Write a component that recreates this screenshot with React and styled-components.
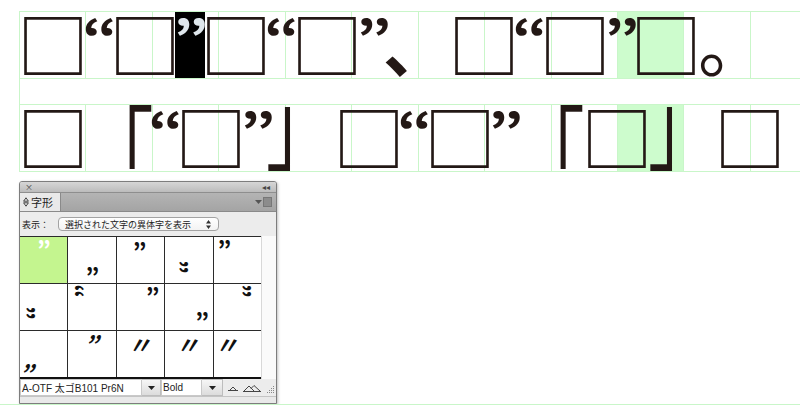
import styled, { createGlobalStyle } from "styled-components";

const GUIDE = "#c9f6c9";
const INK = "#231815";
const CELL = 66.45;

const GlobalStyle = createGlobalStyle`
  html, body { margin: 0; padding: 0; background: #fff; }
  body { font-family: "Noto Sans CJK JP", "Liberation Sans", sans-serif; }
`;

// type metrics: size, weight, advance (em), ink shift, squash
const TYPES = {
  "□": { size: 72, weight: 400, adv: 1, dx: -5, dy: -3 },
  "“": { size: 62, weight: 700, adv: 0.4, dx: -5, dy: -3, sy: 0.78 },
  "”": { size: 62, weight: 700, adv: 0.4, dx: -5, dy: -3, sy: 0.78 },
  "、": { size: 66, weight: 700, adv: 1, dx: -4, dy: -2 },
  "。": { size: 70, weight: 400, adv: 1, dx: -3, dy: -3 },
  "「": { size: 98, weight: 400, adv: 0.7, dx: -43, dy: 7, sx: 0.7 },
  "」": { size: 98, weight: 400, adv: 0.7, dx: -3, dy: -19, sx: 0.7 },
};

// ink start x of every glyph on the frame grid
const line1 = [
  { x: 23, ch: "□" },
  { x: 88, ch: "“" },
  { x: 115, ch: "□" },
  { x: 176, ch: "”", selected: true, shift: 3 },
  { x: 206, ch: "□" },
  { x: 270, ch: "“" },
  { x: 297, ch: "□" },
  { x: 362, ch: "”" },
  { x: 388, ch: "、" },
  { x: 454, ch: "□" },
  { x: 518, ch: "“" },
  { x: 545, ch: "□" },
  { x: 610, ch: "”" },
  { x: 636, ch: "□" },
  { x: 702, ch: "。" },
];

const line2 = [
  { x: 23, ch: "□" },
  { x: 129, ch: "「" },
  { x: 154, ch: "“" },
  { x: 181, ch: "□" },
  { x: 246, ch: "”" },
  { x: 270, ch: "」" },
  { x: 339, ch: "□" },
  { x: 403, ch: "“" },
  { x: 430, ch: "□" },
  { x: 494, ch: "”" },
  { x: 560, ch: "「" },
  { x: 587, ch: "□" },
  { x: 652, ch: "」" },
  { x: 720, ch: "□" },
];

// alternates shown in the glyph panel (ink position inside each 48px cell)
const glyphs = [
  { x: 18, y: 5, active: true },
  { x: 18, y: 33 },
  { x: 17, y: 8 },
  { x: 13, y: 29, rot: 90 },
  { x: 5, y: 3 },
  { x: 5, y: 28, rot: 90 },
  { x: 5, y: 5, rot: -90 },
  { x: 30, y: 5 },
  { x: 31, y: 31 },
  { x: 27, y: 5, rot: 90 },
  { x: 4, y: 36, skew: -18 },
  { x: 21, y: 7, skew: -18 },
  { x: 15, y: 7, ch: "〃", skew: -10 },
  { x: 15, y: 7, ch: "〃", skew: -10 },
  { x: 5, y: 7, ch: "〃", skew: -10 },
];

function TextLine({ items }) {
  return (
    <Row $lead={items[0].x - 20}>
      {items.map((g, i) => {
        const next = items[i + 1];
        const w = next ? next.x - g.x : 70;
        const t = TYPES[g.ch];
        const ls = Math.min(0, Math.floor(w - t.size * t.adv) - 1);
        return (
          <Glyph key={i} $w={w} $selected={g.selected}>
            <Ink
              $size={t.size}
              $weight={t.weight}
              $dx={t.dx + (g.shift || 0)}
              $dy={t.dy}
              $sx={t.sx || 1}
              $sy={t.sy || 1}
              $ls={ls}
              $selected={g.selected}
            >
              {g.ch}
            </Ink>
          </Glyph>
        );
      })}
    </Row>
  );
}

function DownArrow({ color = "#222" }) {
  return (
    <svg width="7" height="4" viewBox="0 0 7 4">
      <path d="M0 0h7L3.5 4z" fill={color} />
    </svg>
  );
}

export default function App() {
  return (
    <Page>
      <GlobalStyle />
      <Frame>
        <TextLine items={line1} />
        <RowGap />
        <TextLine items={line2} />
      </Frame>

      <Panel>
        <TitleBar>
          <span>×</span>
          <span>◂◂</span>
        </TitleBar>
        <TabBar>
          <Tab>
            <svg width="6" height="10" viewBox="0 0 6 10">
              <path d="M3 0.8L5.4 4.2H0.6z M3 9.2L5.4 5.8H0.6z" fill="none" stroke="#333" strokeWidth="0.9" />
            </svg>
            字形
          </Tab>
          <MenuButton>
            <DownArrow color="#555" />
            <MenuSquare />
          </MenuButton>
        </TabBar>
        <ShowRow>
          <Label>表示：</Label>
          <Select>
            <span>選択された文字の異体字を表示</span>
            <Stepper>
              <svg width="5" height="9" viewBox="0 0 5 9">
                <path d="M2.5 0L5 3.5H0z M2.5 9L5 5.5H0z" fill="#333" />
              </svg>
            </Stepper>
          </Select>
        </ShowRow>
        <GlyphArea>
          <GlyphGrid>
            {glyphs.map((g, i) => (
              <GlyphCell key={i} $active={g.active} $x={g.x} $y={g.y}>
                <SmallGlyph $rot={g.rot} $skew={g.skew} $active={g.active}>
                  {g.ch || "”"}
                </SmallGlyph>
              </GlyphCell>
            ))}
          </GlyphGrid>
          <ScrollTrack />
        </GlyphArea>
        <BottomBar>
          <Field $w={122}>A-OTF 太ゴB101 Pr6N</Field>
          <DropButton>
            <DownArrow />
          </DropButton>
          <Field $w={41}>Bold</Field>
          <DropButton $w={20}>
            <DownArrow />
          </DropButton>
          <SizeIcon>
            <svg width="10" height="6" viewBox="0 0 10 6">
              <path d="M0 5.5h10M2 5L5 2l3 3" fill="none" stroke="#444" strokeWidth="1" />
            </svg>
          </SizeIcon>
          <SizeIcon>
            <svg width="18" height="8" viewBox="0 0 18 8">
              <path d="M0 7.5h18M1 7L6 2l5 5M8 4.5L11 1.5l6 5.5" fill="none" stroke="#444" strokeWidth="1" />
            </svg>
          </SizeIcon>
          <Grip>
            <svg width="10" height="10" viewBox="0 0 10 10">
              {[
                [8, 2],
                [6, 4],
                [8, 4],
                [4, 6],
                [6, 6],
                [8, 6],
                [2, 8],
                [4, 8],
                [6, 8],
                [8, 8],
              ].map(([cx, cy], i) => (
                <rect key={i} x={cx} y={cy} width="1" height="1" fill="#888" />
              ))}
            </svg>
          </Grip>
        </BottomBar>
        <Footer>
          <FooterGrip />
        </Footer>
      </Panel>
    </Page>
  );
}

const Page = styled.div`
  position: relative;
  width: 800px;
  height: 405px;
  box-sizing: border-box;
  overflow: hidden;
  background: #fff;
  border-bottom: 1px solid ${GUIDE};
  padding: 11px 0 0 19px;
`;

const Frame = styled.div`
  display: flex;
  flex-direction: column;
`;

const Row = styled.div`
  display: flex;
  align-items: stretch;
  height: 66px;
  width: 781px;
  padding-left: ${(p) => p.$lead}px;
  box-sizing: content-box;
  border-top: 1px solid ${GUIDE};
  border-bottom: 1px solid ${GUIDE};
  background:
    repeating-linear-gradient(to right, ${GUIDE} 0 1px, transparent 1px ${CELL}px),
    linear-gradient(to right, transparent 598px, #cdfccd 598px 665px, transparent 665px);
`;

const RowGap = styled.div`
  height: 25px;
  border-left: 1px solid ${GUIDE};
`;

const Glyph = styled.span`
  flex: none;
  width: ${(p) => p.$w}px;
  height: 66px;
  background: ${(p) => (p.$selected ? "#000" : "transparent")};
`;

const Ink = styled.span`
  display: block;
  margin: ${(p) => p.$dy}px 0 0 ${(p) => p.$dx}px;
  font-family: "Noto Sans CJK JP", sans-serif;
  font-weight: ${(p) => p.$weight};
  font-size: ${(p) => p.$size}px;
  line-height: 66px;
  letter-spacing: ${(p) => p.$ls}px;
  white-space: nowrap;
  color: ${(p) => (p.$selected ? "#dfe7ec" : INK)};
  transform-origin: left top;
  transform: scale(${(p) => p.$sx}, ${(p) => p.$sy});
`;

const Panel = styled.div`
  position: absolute;
  left: 19px;
  top: 181px;
  width: 258px;
  height: 223px;
  box-sizing: border-box;
  display: flex;
  flex-direction: column;
  border: 1px solid #7d7d7d;
  border-radius: 3px 3px 0 0;
  background: #ececec;
  box-shadow: 1px 1px 3px rgba(0, 0, 0, 0.25);
  font-family: "Noto Sans CJK JP", "Liberation Sans", sans-serif;
  overflow: hidden;
`;

const TitleBar = styled.div`
  height: 10px;
  display: flex;
  justify-content: space-between;
  align-items: center;
  padding: 0 6px 0 5px;
  background: linear-gradient(#d6d6d6, #bcbcbc);
  border-bottom: 1px solid #8e8e8e;
  font-size: 8px;
  line-height: 10px;
  color: #444;
`;

const TabBar = styled.div`
  height: 18px;
  display: flex;
  align-items: stretch;
  background: linear-gradient(#b4b4b4, #a4a4a4);
  border-bottom: 1px solid #8a8a8a;
`;

const Tab = styled.div`
  width: 41px;
  display: flex;
  align-items: center;
  gap: 2px;
  padding-left: 3px;
  box-sizing: border-box;
  background: #e9e9e9;
  border-right: 1px solid #8a8a8a;
  font-size: 11px;
  color: #222;
`;

const MenuButton = styled.div`
  margin-left: auto;
  display: flex;
  align-items: center;
  gap: 1px;
  padding-right: 4px;
`;

const MenuSquare = styled.span`
  width: 7px;
  height: 8px;
  background: #8c8c8c;
  border: 1px solid #777;
`;

const ShowRow = styled.div`
  height: 24px;
  display: flex;
  align-items: center;
  padding-left: 2px;
  background: #ececec;
`;

const Label = styled.span`
  font-size: 9px;
  color: #222;
  width: 36px;
`;

const Select = styled.div`
  width: 161px;
  height: 14px;
  box-sizing: border-box;
  display: flex;
  align-items: center;
  justify-content: space-between;
  padding: 0 7px 0 6px;
  border: 1px solid #a3a3a3;
  border-radius: 4px;
  background: linear-gradient(#ffffff, #f3f3f3);
  font-size: 9px;
  color: #222;
`;

const Stepper = styled.span`
  display: flex;
`;

const GlyphArea = styled.div`
  display: flex;
  height: 143px;
  background: #fff;
`;

const GlyphGrid = styled.div`
  width: 241px;
  display: grid;
  grid-template-columns: repeat(5, 1fr);
  grid-template-rows: repeat(3, 1fr);
  gap: 1px;
  background: #2b2b2b;
  border-top: 1px solid #2b2b2b;
  border-bottom: 2px solid #111;
  box-sizing: border-box;
`;

const GlyphCell = styled.div`
  background: ${(p) => (p.$active ? "#c4f58f" : "#fff")};
  padding: ${(p) => Math.max(0, p.$y - 6)}px 0 0 ${(p) => Math.max(0, p.$x - 1)}px;
  overflow: hidden;
`;

const SmallGlyph = styled.span`
  display: inline-block;
  font-family: "Noto Sans CJK JP", sans-serif;
  font-weight: 700;
  font-size: 24px;
  line-height: 24px;
  height: 14px;
  color: ${(p) => (p.$active ? "#fff" : "#111")};
  transform: ${(p) => (p.$rot ? `rotate(${p.$rot}deg)` : "")} ${(p) => (p.$skew ? `skewX(${p.$skew}deg)` : "")};
`;

const ScrollTrack = styled.div`
  flex: 1;
  background: #fafafa;
  border-left: 1px solid #d8d8d8;
`;

const BottomBar = styled.div`
  height: 17px;
  display: flex;
  align-items: stretch;
  background: #ececec;
`;

const Field = styled.div`
  width: ${(p) => p.$w}px;
  box-sizing: border-box;
  padding-left: 1px;
  display: flex;
  align-items: center;
  background: #fff;
  border: 1px solid #c9c9c9;
  font-family: "Liberation Sans", "Noto Sans CJK JP", sans-serif;
  font-size: 10px;
  color: #222;
  white-space: nowrap;
  overflow: hidden;
`;

const DropButton = styled.div`
  width: ${(p) => p.$w || 18}px;
  display: flex;
  align-items: center;
  justify-content: center;
  background: linear-gradient(#f6f6f6, #dcdcdc);
  border: 1px solid #bdbdbd;
  border-left: none;
`;

const SizeIcon = styled.div`
  display: flex;
  align-items: center;
  padding-left: 5px;
`;

const Grip = styled.div`
  margin-left: auto;
  display: flex;
  align-items: flex-end;
  padding: 0 1px 2px 0;
`;

const Footer = styled.div`
  flex: 1;
  display: flex;
  justify-content: center;
  align-items: center;
  background: #e9e9e9;
  border-top: 1px solid #c4c4c4;
`;

const FooterGrip = styled.span`
  width: 20px;
  height: 3px;
  background-image: radial-gradient(#8a8a8a 0.6px, transparent 0.7px);
  background-size: 2px 2px;
`;
